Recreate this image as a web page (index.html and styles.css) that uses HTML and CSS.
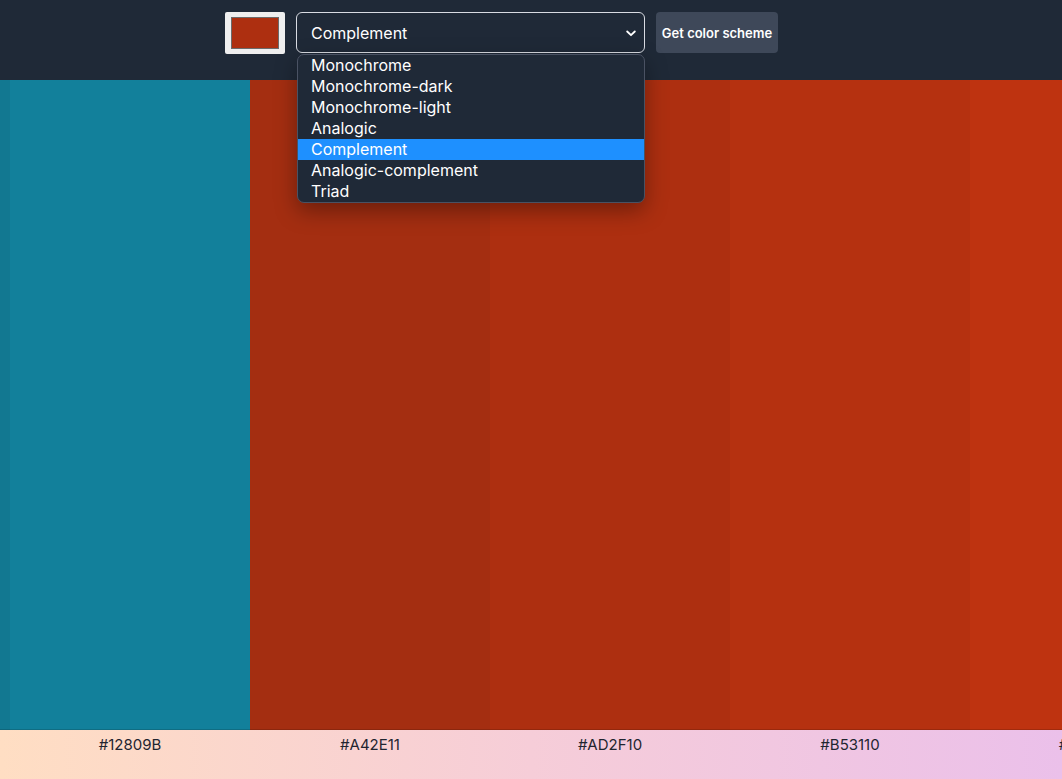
FILE: index.html
```html
<!DOCTYPE html>
<html lang="en">
<head>
<meta charset="utf-8">
<title>Color Scheme</title>
<link rel="stylesheet" href="styles.css">
</head>
<body>
<header class="topbar">
  <div class="swatch-input"><div class="swatch-fill"></div></div>
  <div class="select-wrap">
    <div class="select">
      <span>Complement</span>
      <svg class="chev" width="10" height="7" viewBox="0 0 10 7"><path d="M1.2 1.5 L5 5.2 L8.8 1.5" fill="none" stroke="#fff" stroke-width="1.8" stroke-linecap="round" stroke-linejoin="round"/></svg>
    </div>
    <ul class="menu">
      <li>Monochrome</li>
      <li>Monochrome-dark</li>
      <li>Monochrome-light</li>
      <li>Analogic</li>
      <li class="active">Complement</li>
      <li>Analogic-complement</li>
      <li>Triad</li>
    </ul>
  </div>
  <button class="btn">Get color scheme</button>
</header>
<main class="scheme">
  <div class="colors">
    <div class="edge"></div>
    <div class="col" style="background:#12809B"></div>
    <div class="col" style="background:#A42E11"></div>
    <div class="col" style="background:#AD2F10"></div>
    <div class="col" style="background:#B53110"></div>
    <div class="col" style="background:#BE3310"></div>
  </div>
  <div class="codes">
    <div class="code">#12809B</div>
    <div class="code">#A42E11</div>
    <div class="code">#AD2F10</div>
    <div class="code">#B53110</div>
    <div class="code">#BE3310</div>
  </div>
</main>
</body>
</html>
```
FILE: styles.css
```css
html, body {
  margin: 0;
  padding: 0;
  overflow: hidden;
  height: 779px;
  font-family: Inter, "Liberation Sans", sans-serif;
}
.topbar {
  height: 80px;
  background: #1f2937;
  display: flex;
  align-items: flex-start;
  gap: 11px;
  padding: 12px 0 0 225px;
  box-sizing: border-box;
  position: relative;
  z-index: 2;
}
.swatch-input {
  width: 60px;
  height: 42px;
  box-sizing: border-box;
  background: #efefef;
  border-radius: 2px;
  padding: 5px 6px;
}
.swatch-fill {
  width: 100%;
  height: 100%;
  box-sizing: border-box;
  background: #AD2F10;
  border: 1px solid #6b6b6b;
}
.select-wrap {
  position: relative;
  width: 349px;
}
.select {
  height: 41px;
  box-sizing: border-box;
  border: 1px solid #d8dbe2;
  border-radius: 6px;
  background: #1f2937;
  color: #fff;
  font-size: 16px;
  display: flex;
  align-items: center;
  justify-content: space-between;
  padding: 0 8px 0 14px;
}
.chev { margin-top: 1px; }
.menu {
  position: absolute;
  left: 1px;
  top: 42px;
  width: 348px;
  margin: 0;
  padding: 0;
  list-style: none;
  background: #1f2937;
  border: 1px solid #4a5263;
  border-radius: 7px;
  box-sizing: border-box;
  box-shadow: 0 8px 22px rgba(0, 0, 0, 0.35);
  overflow: hidden;
}
.menu li {
  height: 21px;
  line-height: 21px;
  padding-left: 13px;
  color: #fff;
  font-size: 16px;
}
.menu li.active { background: #1e90ff; }
.btn {
  width: 122px;
  height: 41px;
  border: none;
  border-radius: 4px;
  background: #3e4859;
  color: #fff;
  font-family: Inter, "Liberation Sans", sans-serif;
  font-weight: 600;
  font-size: 13px;
  padding: 0;
}
.scheme {
  width: 1210px;
}
.colors {
  display: flex;
  height: 650px;
}
.edge {
  width: 10px;
  background: #127891;
  box-shadow: inset 0 -1px rgba(0, 0, 0, 0.15);
}
.col {
  width: 240px;
  flex: none;
  box-shadow: inset 0 -1px rgba(0, 0, 0, 0.15);
}
.codes {
  display: flex;
  padding-left: 10px;
  height: 60px;
  width: 1062px;
  box-sizing: border-box;
  background: linear-gradient(to right, #ffdec3, #f6cdd8 50%, #ebc0ea);
}
.code {
  width: 240px;
  flex: none;
  text-align: center;
  font-size: 15px;
  color: #1f2530;
  padding-top: 5px;
}
```
